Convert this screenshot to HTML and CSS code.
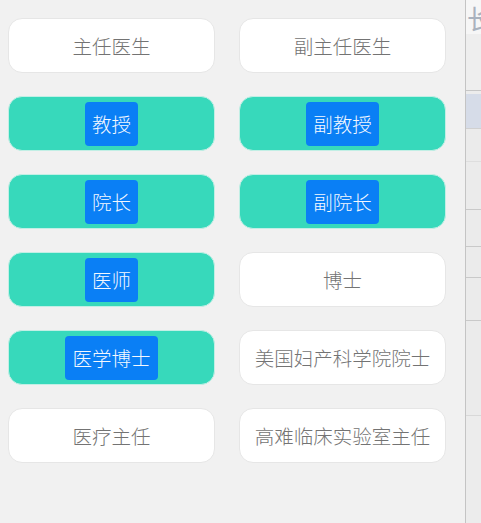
FILE: index.html
```html
<!DOCTYPE html>
<html lang="zh">
<head>
<meta charset="utf-8">
<link rel="stylesheet" href="styles.css">
</head>
<body>
<div class="page">
  <div class="panel">
    <div class="grid">
      <div class="tag">主任医生</div>
      <div class="tag">副主任医生</div>
      <div class="tag on"><span class="mark">教授</span></div>
      <div class="tag on"><span class="mark">副教授</span></div>
      <div class="tag on"><span class="mark">院长</span></div>
      <div class="tag on"><span class="mark">副院长</span></div>
      <div class="tag on"><span class="mark">医师</span></div>
      <div class="tag">博士</div>
      <div class="tag on"><span class="mark">医学博士</span></div>
      <div class="tag">美国妇产科学院院士</div>
      <div class="tag">医疗主任</div>
      <div class="tag">高难临床实验室主任</div>
    </div>
  </div>
  <div class="strip">
    <div class="s-head">长</div>
    <div class="s-gap"></div>
    <div class="s-band"></div>
    <div class="s-row h32"></div>
    <div class="s-row h47"></div>
    <div class="s-row h36"></div>
    <div class="s-row h31"></div>
    <div class="s-row h42"></div>
    <div class="s-row h94"></div>
  </div>
</div>
</body>
</html>
```
FILE: styles.css
```css
html, body {
  margin: 0;
  padding: 0;
}
body {
  width: 481px;
  height: 523px;
  overflow: hidden;
  font-family: "Noto Sans CJK SC", "Noto Sans", sans-serif;
}
.page {
  display: flex;
  height: 523px;
}
.panel {
  width: 466px;
  background: #f1f1f1;
  border-right: 1px solid #c4c4c4;
  box-sizing: border-box;
  padding: 18px 0 0 8px;
}
.grid {
  display: grid;
  grid-template-columns: 207px 207px;
  grid-auto-rows: 55px;
  column-gap: 24px;
  row-gap: 23px;
}
.tag {
  box-sizing: border-box;
  border: 1px solid #e6e6e6;
  border-radius: 14px;
  background: #ffffff;
  display: flex;
  align-items: center;
  justify-content: center;
  font-size: 19.5px;
  font-weight: 300;
  color: #737373;
  white-space: nowrap;
}
.tag.on {
  background: #37d9bb;
  border-color: #c2efe5;
}
.mark {
  background: #0a7ff5;
  color: #f4f8ff;
  border-radius: 4px;
  height: 44px;
  line-height: 44px;
  padding: 0 7px;
}
.strip {
  flex: 1;
  background: #ececec;
  overflow: hidden;
  display: flex;
  flex-direction: column;
}
.s-head {
  height: 34px;
  background: #f6f6f6;
  color: #aab2be;
  font-size: 26px;
  line-height: 36px;
  padding-left: 1px;
  white-space: nowrap;
}
.s-gap {
  height: 56px;
  background: #eeeeee;
  border-bottom: 1px solid #c6c6c6;
}
.s-band {
  height: 34px;
  margin-top: 3px;
  background: #d6dce8;
  border-bottom: 1px solid #d0d0d0;
}
.s-row {
  background: #ebebeb;
  border-bottom: 1px solid #c9c9c9;
}
.h32 { height: 32px; border-bottom-color: #dedede; }
.h47 { height: 47px; }
.h36 { height: 36px; }
.h31 { height: 30px; }
.h42 { height: 42px; }
.h94 { height: 94px; border-bottom-color: #d8d8d8; }
```
